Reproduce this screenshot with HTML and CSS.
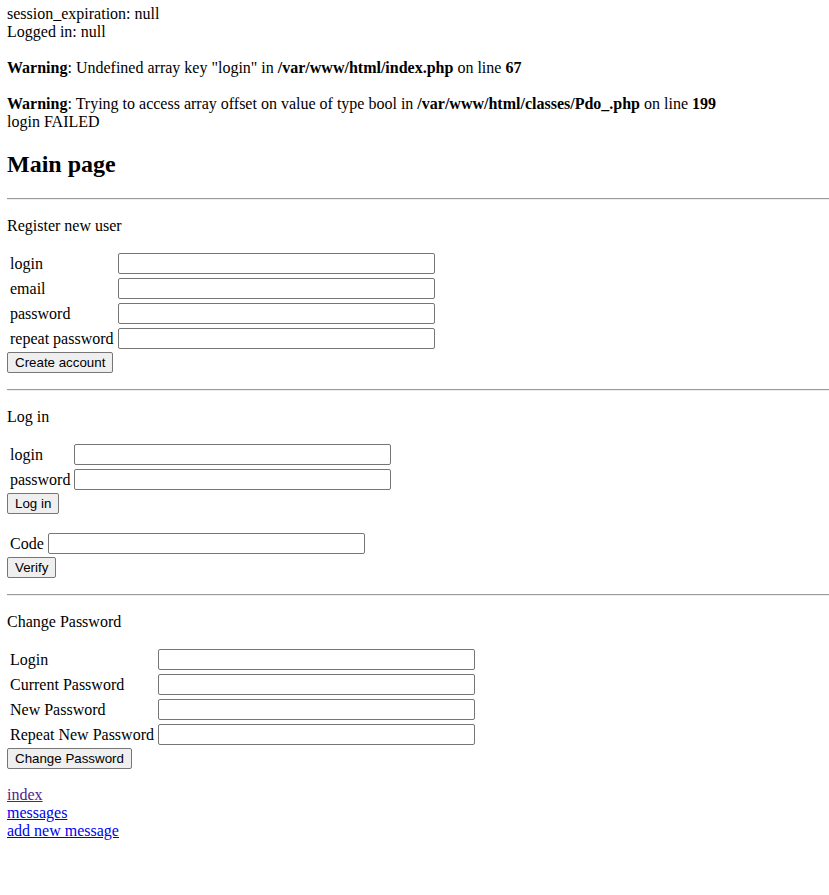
FILE: index.html
```html
<!DOCTYPE html>
<html>
<head>
<meta charset="utf-8">
<title>Main page</title>
<link rel="stylesheet" href="styles.css">
</head>
<body class="page">
<div class="debug">session_expiration: null<br>Logged in: null<br><br><b>Warning</b>: Undefined array key "login" in <b>/var/www/html/index.php</b> on line <b>67</b><br><br><b>Warning</b>: Trying to access array offset on value of type bool in <b>/var/www/html/classes/Pdo_.php</b> on line <b>199</b><br>login FAILED</div>
<h1 class="title">Main page</h1>
<hr class="rule">
<form class="form">
<p class="form-title">Register new user</p>
<table class="grid">
<tr><td class="label">login</td><td><input class="field" type="text"></td></tr>
<tr><td class="label">email</td><td><input class="field" type="text"></td></tr>
<tr><td class="label">password</td><td><input class="field" type="password"></td></tr>
<tr><td class="label">repeat password</td><td><input class="field" type="password"></td></tr>
</table>
<button class="btn" type="button">Create account</button>
</form>
<hr class="rule">
<form class="form">
<p class="form-title">Log in</p>
<table class="grid">
<tr><td class="label">login</td><td><input class="field" type="text"></td></tr>
<tr><td class="label">password</td><td><input class="field" type="password"></td></tr>
</table>
<button class="btn" type="button">Log in</button>
</form>
<form class="form">
<table class="grid">
<tr><td class="label">Code</td><td><input class="field" type="text"></td></tr>
</table>
<button class="btn" type="button">Verify</button>
</form>
<hr class="rule">
<form class="form">
<p class="form-title">Change Password</p>
<table class="grid">
<tr><td class="label">Login</td><td><input class="field" type="text"></td></tr>
<tr><td class="label">Current Password</td><td><input class="field" type="password"></td></tr>
<tr><td class="label">New Password</td><td><input class="field" type="password"></td></tr>
<tr><td class="label">Repeat New Password</td><td><input class="field" type="password"></td></tr>
</table>
<button class="btn" type="button">Change Password</button>
</form>
<div class="links">
<a class="link visited" href="#">index</a><br>
<a class="link" href="#">messages</a><br>
<a class="link" href="#">add new message</a>
</div>
</body>
</html>
```

FILE: styles.css
```css
html {
  background: #ffffff;
}

.page {
  margin: 5px 0 8px 7px;
  font-family: "Liberation Serif", "Times New Roman", serif;
  font-size: 16px;
  line-height: 18px;
  color: #000000;
}

.title {
  font-size: 24px;
  line-height: 28px;
  font-weight: bold;
  margin: 19px 0 20px 0;
}

.rule {
  margin: 8px 0;
  border: 0;
  border-top: 1px solid #9a9a9a;
  border-bottom: 1px solid #eeeeee;
  height: 0;
}

.form {
  margin: 0 0 16px 0;
}

.form-title {
  margin: 17px 0 15px 0;
}

.grid {
  border-spacing: 2px;
  border-collapse: separate;
  font-size: 16px;
}

.grid td {
  padding: 1px;
  vertical-align: middle;
}

.label {
  white-space: nowrap;
}

.field {
  box-sizing: border-box;
  width: 317px;
  height: 21px;
  margin: 0;
  padding: 1px 2px;
  border: 1px solid #767676;
  border-radius: 2px;
  background: #ffffff;
  font-family: "Liberation Sans", Arial, sans-serif;
  font-size: 13.333px;
  vertical-align: middle;
}

.btn {
  box-sizing: border-box;
  height: 21px;
  margin: 0;
  padding: 2px 7px;
  border: 1px solid #767676;
  border-radius: 2px;
  background: #efefef;
  color: #000000;
  font-family: "Liberation Sans", Arial, sans-serif;
  font-size: 13.333px;
  line-height: 15px;
}

.links {
  padding-top: 1px;
  line-height: 18px;
}

.link {
  color: #0000ee;
  text-decoration: underline;
}

.link.visited {
  color: #551a8b;
}
```
